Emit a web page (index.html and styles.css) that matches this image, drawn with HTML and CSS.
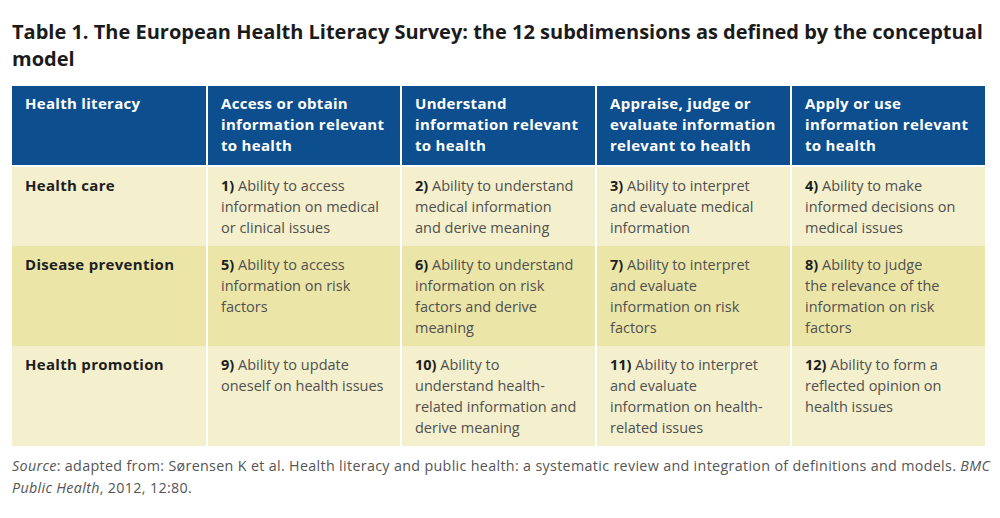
FILE: index.html
```html
<!DOCTYPE html>
<html lang="en">
<head>
<meta charset="utf-8">
<title>Table 1. The European Health Literacy Survey</title>
<link rel="stylesheet" href="styles.css">
</head>
<body>
<div class="page">
  <h1 class="title">Table 1. The European Health Literacy Survey: the 12 subdimensions as defined by the conceptual<br>model</h1>
  <div class="table">
    <div class="cell head">Health literacy</div>
    <div class="cell head">Access or obtain<br>information relevant<br>to health</div>
    <div class="cell head">Understand<br>information relevant<br>to health</div>
    <div class="cell head">Appraise, judge or<br>evaluate information<br>relevant to health</div>
    <div class="cell head">Apply or use<br>information relevant<br>to health</div>

    <div class="cell label light">Health care</div>
    <div class="cell light"><b>1)</b> Ability to access<br>information on medical<br>or clinical issues</div>
    <div class="cell light"><b>2)</b> Ability to understand<br>medical information<br>and derive meaning</div>
    <div class="cell light"><b>3)</b> Ability to interpret<br>and evaluate medical<br>information</div>
    <div class="cell light"><b>4)</b> Ability to make<br>informed decisions on<br>medical issues</div>

    <div class="cell label dark">Disease prevention</div>
    <div class="cell dark"><b>5)</b> Ability to access<br>information on risk<br>factors</div>
    <div class="cell dark"><b>6)</b> Ability to understand<br>information on risk<br>factors and derive<br>meaning</div>
    <div class="cell dark"><b>7)</b> Ability to interpret<br>and evaluate<br>information on risk<br>factors</div>
    <div class="cell dark"><b>8)</b> Ability to judge<br>the relevance of the<br>information on risk<br>factors</div>

    <div class="cell label light">Health promotion</div>
    <div class="cell light"><b>9)</b> Ability to update<br>oneself on health issues</div>
    <div class="cell light"><b>10)</b> Ability to<br>understand health-<br>related information and<br>derive meaning</div>
    <div class="cell light"><b>11)</b> Ability to interpret<br>and evaluate<br>information on health-<br>related issues</div>
    <div class="cell light"><b>12)</b> Ability to form a<br>reflected opinion on<br>health issues</div>
  </div>
  <p class="source"><i>Source</i>: adapted from: Sørensen K et al. Health literacy and public health: a systematic review and integration of definitions and models. <i>BMC</i><br><i>Public Health</i>, 2012, 12:80.</p>
</div>
</body>
</html>
```
FILE: styles.css
```css
html, body {
  margin: 0;
  padding: 0;
  background: #ffffff;
}
.page {
  width: 1000px;
  height: 518px;
  box-sizing: border-box;
  padding: 18px 0 0 12px;
  font-family: "Open Sans", "Noto Sans", sans-serif;
}
.title {
  margin: 0;
  font-size: 20px;
  line-height: 27px;
  font-weight: 700;
  color: #1b1b1b;
  white-space: nowrap;
}
.table {
  margin-top: 14px;
  width: 973px;
  display: grid;
  grid-template-columns: 194px 192px 193px 193px 193px;
  column-gap: 2px;
}
.cell {
  padding: 8px 6px 8px 13px;
  font-size: 14.5px;
  line-height: 21px;
  color: #505050;
  white-space: nowrap;
}
.cell b {
  font-weight: 700;
  color: #1e1e1e;
}
.head {
  background: #0d4e8e;
  color: #ffffff;
  font-weight: 700;
  font-size: 15px;
  letter-spacing: 0.3px;
  padding-top: 7px;
  padding-bottom: 9px;
  margin-bottom: 2px;
}
.label {
  font-weight: 700;
  font-size: 15px;
  letter-spacing: 0.3px;
  color: #1e1e1e;
}
.light {
  background: #f4efcc;
}
.dark {
  background: #ebe6a8;
}
.source {
  margin: 9px 0 0 0;
  font-size: 14.3px;
  line-height: 22px;
  letter-spacing: 0.33px;
  color: #555555;
  white-space: nowrap;
}
```
